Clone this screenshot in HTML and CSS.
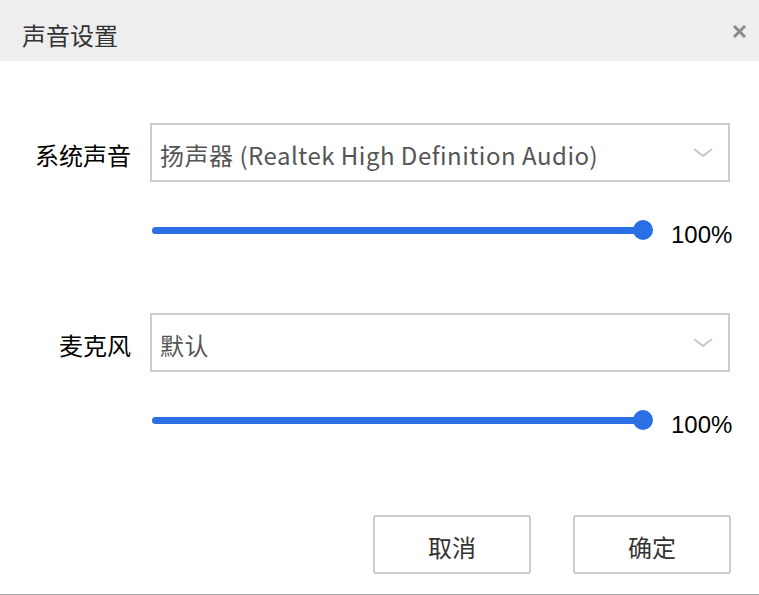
FILE: index.html
```html
<!DOCTYPE html>
<html>
<head>
  <meta charset="UTF-8">
  <title>声音设置</title>
  <link rel="stylesheet" href="styles.css">
</head>
<body>
  <div class="dialog">
    <!-- title bar -->
    <div class="header">
      <span class="title">声音设置</span>
      <span class="close">
        <svg width="15" height="15" viewBox="0 0 15 15"><path d="M2 2 L13 13 M13 2 L2 13" stroke="#8c8c8c" stroke-width="3" fill="none"/></svg>
      </span>
    </div>

    <div class="content">
      <div class="row">
        <label class="label">系统声音</label>
        <div class="select">
          <span class="value">扬声器 (Realtek High Definition Audio)</span>
          <svg class="arrow" width="20" height="10" viewBox="0 0 20 10"><polyline points="1,1 10,8 19,1" stroke="#c8c8c8" stroke-width="2" fill="none"/></svg>
        </div>
      </div>
      <div class="slider-row">
        <div class="slider"><div class="fill" style="width:100%"></div><div class="thumb"></div></div>
        <span class="percent">100%</span>
      </div>

      <div class="row second">
        <label class="label">麦克风</label>
        <div class="select">
          <span class="value">默认</span>
          <svg class="arrow" width="20" height="10" viewBox="0 0 20 10"><polyline points="1,1 10,8 19,1" stroke="#c8c8c8" stroke-width="2" fill="none"/></svg>
        </div>
      </div>
      <div class="slider-row">
        <div class="slider"><div class="fill" style="width:100%"></div><div class="thumb"></div></div>
        <span class="percent">100%</span>
      </div>

      <div class="buttons">
        <button class="btn">取消</button>
        <button class="btn">确定</button>
      </div>
    </div>
  </div>
</body>
</html>
```

FILE: styles.css
```css
body {
  margin: 0;
  background: #fff;
  font-family: "Noto Sans CJK SC", "Noto Sans", sans-serif;
}
.dialog {
  width: 759px;
  height: 595px;
  box-sizing: border-box;
  border-bottom: 1px solid #aaa;
}
.header {
  height: 61px;
  background: #eeeeee;
  display: flex;
  align-items: center;
  justify-content: space-between;
  padding: 0 12px 0 22px;
}
.title {
  font-size: 24px;
  color: #333;
  margin-top: 7px;
}
.close {
  display: flex;
  margin-top: 1px;
}
.content {
  padding-top: 62px;
}
.row {
  display: flex;
  align-items: center;
}
.row.second {
  margin-top: 72px;
}
.label {
  width: 150px;
  text-align: right;
  padding: 4px 19px 0 0;
  box-sizing: border-box;
  font-size: 24px;
  color: #000;
}
.select {
  width: 580px;
  height: 59px;
  box-sizing: border-box;
  border: 2px solid #ccc;
  display: flex;
  align-items: center;
  justify-content: space-between;
  padding: 0 15px 0 8px;
}
.value {
  padding-top: 4px;
  font-size: 24px;
  letter-spacing: 0.5px;
  color: #555;
}
.arrow {
  display: block;
}
.slider-row {
  display: flex;
  align-items: center;
  margin: 37px 0 0 152px;
  height: 22px;
}
.slider {
  position: relative;
  width: 491px;
  height: 7px;
  border-radius: 4px;
  background: #ddd;
}
.fill {
  height: 100%;
  border-radius: 4px;
  background: #2a6fe3;
}
.thumb {
  position: absolute;
  right: -10px;
  top: -7px;
  width: 20px;
  height: 20px;
  border-radius: 50%;
  background: #2a6fe3;
}
.percent {
  margin: 10px 0 0 28px;
  font-family: "Liberation Sans", Arial, sans-serif;
  font-size: 24px;
  color: #000;
}
.buttons {
  display: flex;
  gap: 42px;
  margin: 84px 0 0 373px;
}
.btn {
  width: 158px;
  height: 59px;
  padding-top: 4px;
  background: #fff;
  border: 2px solid #ccc;
  border-radius: 3px;
  font-family: "Noto Sans CJK SC", sans-serif;
  font-size: 24px;
  color: #333;
}
```
